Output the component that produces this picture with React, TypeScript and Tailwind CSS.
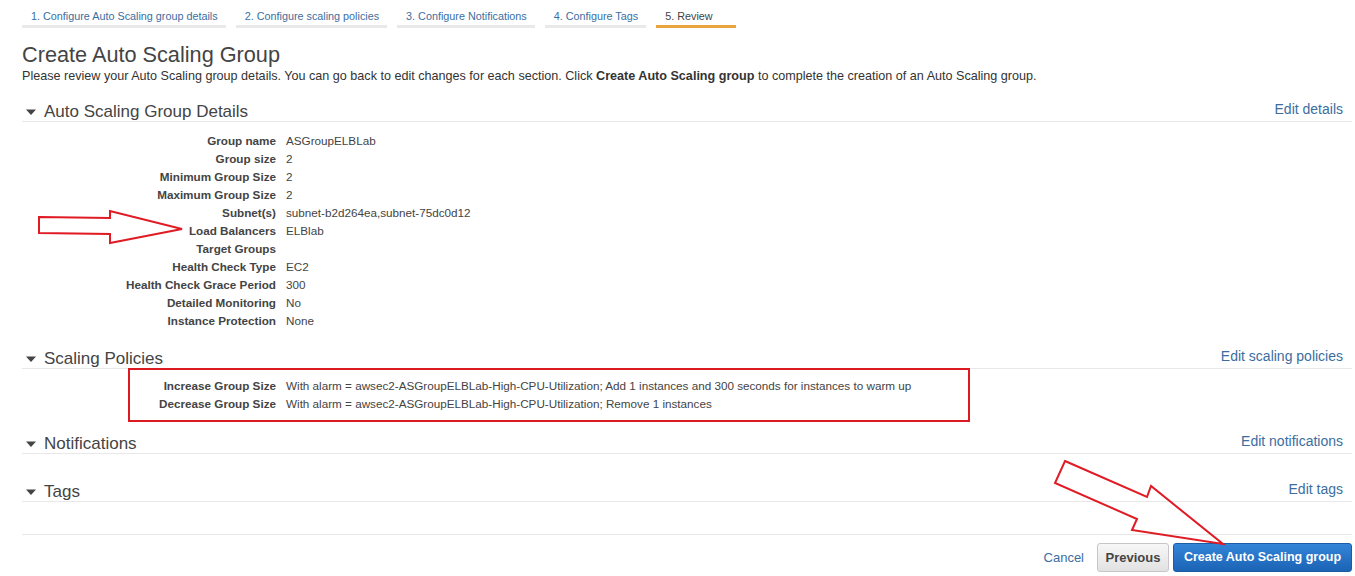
import React from 'react'

const tabs = [
  { label: '1. Configure Auto Scaling group details', active: false },
  { label: '2. Configure scaling policies', active: false },
  { label: '3. Configure Notifications', active: false },
  { label: '4. Configure Tags', active: false },
  { label: '5. Review', active: true },
]

const details: [string, string][] = [
  ['Group name', 'ASGroupELBLab'],
  ['Group size', '2'],
  ['Minimum Group Size', '2'],
  ['Maximum Group Size', '2'],
  ['Subnet(s)', 'subnet-b2d264ea,subnet-75dc0d12'],
  ['Load Balancers', 'ELBlab'],
  ['Target Groups', ''],
  ['Health Check Type', 'EC2'],
  ['Health Check Grace Period', '300'],
  ['Detailed Monitoring', 'No'],
  ['Instance Protection', 'None'],
]

const policies: [string, string][] = [
  ['Increase Group Size', 'With alarm = awsec2-ASGroupELBLab-High-CPU-Utilization; Add 1 instances and 300 seconds for instances to warm up'],
  ['Decrease Group Size', 'With alarm = awsec2-ASGroupELBLab-High-CPU-Utilization; Remove 1 instances'],
]

const Caret = () => (
  <svg width="10" height="8" viewBox="0 0 10 8" className="mr-[8px] ml-[4px] shrink-0">
    <path d="M0 1.5 L10 1.5 L5 7 Z" fill="#444" />
  </svg>
)

const SectionHeader = ({ title, edit, className = '' }: { title: string; edit: string; className?: string }) => (
  <div className={`flex items-end justify-between border-b border-[#e8e8e8] h-[21px] ${className}`}>
    <div className="flex items-center text-[17px] leading-[16px] pb-[1px] text-[#444]">
      <Caret />
      <span>{title}</span>
    </div>
    <a className="text-[14px] leading-[16px] text-[#3b6e9f] pr-[9px] pb-[4px] cursor-pointer">{edit}</a>
  </div>
)

const Row = ({ label, value, labelWidth }: { label: string; value: string; labelWidth: string }) => (
  <div className="flex text-[11.7px] leading-[18px] text-[#444]">
    <div className={`${labelWidth} text-right font-bold shrink-0`}>{label}</div>
    <div className="pl-[10px] whitespace-nowrap">{value}</div>
  </div>
)

export default function App() {
  return (
    <div
      className="relative w-[1355px] h-[576px] bg-white overflow-hidden"
      style={{ fontFamily: '"Liberation Sans", Arial, sans-serif' }}
    >
      <div className="pl-[22px] pr-[3px]">
        {/* wizard steps */}
        <div className="flex gap-[10px] pt-[8px]">
          {tabs.map((t) => (
            <div
              key={t.label}
              className={`border-b-[3px] text-[10.8px] leading-[16px] pb-[1px] ${
                t.active ? 'border-[#e9a43b] text-[#444] pl-[9px] pr-[23px]' : 'border-[#e9e9e9] text-[#3b6e9f] pl-[9px] pr-[8px]'
              }`}
            >
              {t.label}
            </div>
          ))}
        </div>

        <h1 className="mt-[14px] text-[21.7px] leading-[26px] text-[#444]">Create Auto Scaling Group</h1>
        <p className="text-[12.6px] leading-[16px] text-[#333]">
          Please review your Auto Scaling group details. You can go back to edit changes for each section. Click{' '}
          <b>Create Auto Scaling group</b> to complete the creation of an Auto Scaling group.
        </p>

        <SectionHeader title="Auto Scaling Group Details" edit="Edit details" className="mt-[17px]" />
        <div className="mt-[10px]">
          {details.map(([l, v]) => (
            <Row key={l} label={l} value={v} labelWidth="w-[254px]" />
          ))}
        </div>

        <SectionHeader title="Scaling Policies" edit="Edit scaling policies" className="mt-[18px]" />
        <div className="ml-[106px] w-[842px] h-[54px] border-2 border-[#dc1a22] -mt-[1px] pt-[7px]">
          {policies.map(([l, v]) => (
            <Row key={l} label={l} value={v} labelWidth="w-[146px]" />
          ))}
        </div>

        <SectionHeader title="Notifications" edit="Edit notifications" className="mt-[11px]" />
        <SectionHeader title="Tags" edit="Edit tags" className="mt-[27px]" />

        <div className="mt-[32px] border-t border-[#e8e8e8] pt-[8px] flex items-center justify-end gap-[4px]">
          <a className="text-[13px] text-[#3b6e9f] mr-[9px] cursor-pointer">Cancel</a>
          <button className="h-[29px] w-[72px] rounded-[3px] border border-[#c6c6c6] bg-gradient-to-b from-[#f7f7f7] to-[#e2e2e2] text-[13px] font-bold text-[#444]">
            Previous
          </button>
          <button className="h-[29px] w-[179px] rounded-[3px] border border-[#1a5ca6] bg-gradient-to-b from-[#3385d8] to-[#1b63b5] text-[12.5px] font-bold text-white">
            Create Auto Scaling group
          </button>
        </div>
      </div>

      {/* annotation arrows */}
      <svg className="absolute inset-0 pointer-events-none" width="1355" height="576">
        <polygon
          points="39,217 110,218 110,211 182,229 110,243 110,234 39,233"
          fill="none"
          stroke="#e01b24"
          strokeWidth="2"
        />
        <polygon
          points="1065,461 1147,497 1151,486 1223,544 1132,530 1137,519 1055,483"
          fill="none"
          stroke="#e01b24"
          strokeWidth="2"
        />
      </svg>
    </div>
  )
}
